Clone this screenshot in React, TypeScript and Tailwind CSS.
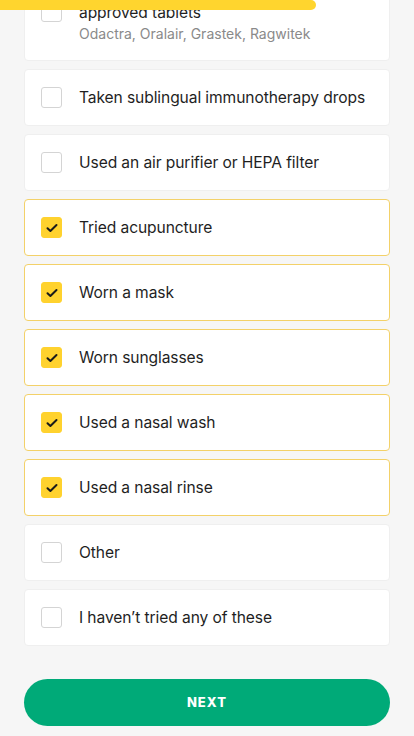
import { useState } from "react";

type Option = {
  id: number;
  label: string;
  sub?: string;
};

const options: Option[] = [
  { id: 1, label: "Taken allergy shots or FDA-\napproved tablets", sub: "Odactra, Oralair, Grastek, Ragwitek" },
  { id: 2, label: "Taken sublingual immunotherapy drops" },
  { id: 3, label: "Used an air purifier or HEPA filter" },
  { id: 4, label: "Tried acupuncture" },
  { id: 5, label: "Worn a mask" },
  { id: 6, label: "Worn sunglasses" },
  { id: 7, label: "Used a nasal wash" },
  { id: 8, label: "Used a nasal rinse" },
  { id: 9, label: "Other" },
  { id: 10, label: "I haven’t tried any of these" },
];

function Check() {
  return (
    <svg width="12" height="10" viewBox="0 0 12 10" fill="none">
      <path d="M1.5 5.2 4.4 8 10.5 2" stroke="#1a1a1a" strokeWidth="2" strokeLinecap="round" strokeLinejoin="round" />
    </svg>
  );
}

export default function App() {
  const [selected, setSelected] = useState<number[]>([4, 5, 6, 7, 8]);

  const toggle = (id: number) => {
    setSelected(prev => (prev.includes(id) ? prev.filter(x => x !== id) : [...prev, id]));
  };

  return (
    <div className="relative h-[736px] w-full overflow-hidden bg-[#f6f6f6] font-['Inter','Liberation_Sans',sans-serif]">
      {/* Progress bar */}
      <div className="absolute left-0 top-0 z-10 h-[10px] w-[316px] rounded-r-full bg-[#ffd52e]" />

      <div className="mt-[-39px] px-6">
        <div className="flex flex-col gap-2">
          {options.map(opt => {
            const on = selected.includes(opt.id);
            return (
              <button
                key={opt.id}
                onClick={() => toggle(opt.id)}
                className={`flex w-full items-center gap-[17px] rounded-[4px] border bg-white py-4 pl-4 pr-3 text-left ${
                  on ? "border-[#f3d169]" : "border-[#efefef]"
                }`}
              >
                <span
                  className={`flex h-[21px] w-[21px] shrink-0 items-center justify-center rounded-[3px] border ${
                    on ? "border-[#ffd22e] bg-[#ffd22e]" : "border-[#d4d4d4] bg-white"
                  }`}
                >
                  {on && <Check />}
                </span>
                <span className="flex min-w-0 flex-col">
                  <span className="whitespace-pre-line text-[15.6px] leading-[23px] tracking-[-0.1px] text-[#1f1f1f]">{opt.label}</span>
                  {opt.sub && <span className="text-[14px] leading-5 text-[#8a8a8a]">{opt.sub}</span>}
                </span>
              </button>
            );
          })}
        </div>

        <button className="mt-[33px] flex h-[47px] w-full items-center justify-center rounded-full bg-[#00aa78] text-[13px] font-extrabold tracking-[0.08em] text-white">
          NEXT
        </button>
      </div>
    </div>
  );
}
